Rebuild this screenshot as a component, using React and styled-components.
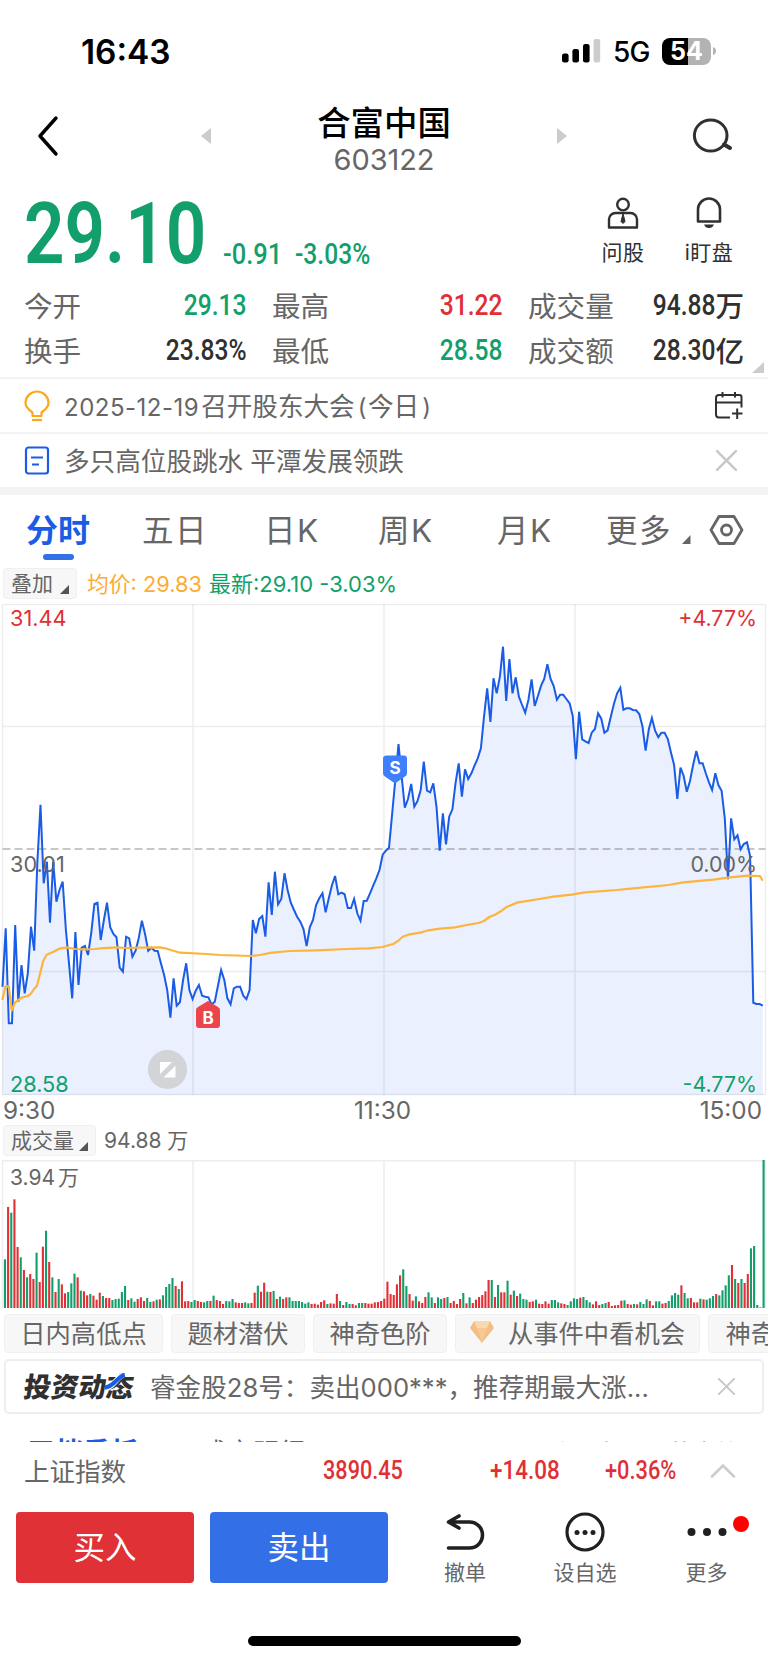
import React from 'react'
import styled, { createGlobalStyle } from 'styled-components'

const GREEN = '#139f6b'
const RED = '#e03035'
const BLUE = '#1a5ce6'
const GREY = '#666'
const DARK = '#303030'

// one value per minute, measured downwards in thirds of a pixel
const PRICES = `1160 985 1270 1270 975 1205 1095 1180 1120 980 1052 790 614 850 785 968 785 905 870 845
990 1090 1195 996 1155 1043 1038 1065 1000 912 908 1020 960 908 982 1002 1012 1103 1115 1010
1015 1070 1052 1015 962 1003 1052 1043 1052 1053 1090 1125 1170 1253 1135 1217 1207 1140 1090 1170
1197 1172 1155 1187 1190 1192 1213 1205 1158 1110 1140 1195 1213 1165 1160 1160 1187 1197 1170 960
1000 957 948 1010 847 945 815 913 897 820 870 908 930 950 965 987 1038 982 960 915
895 880 937 895 855 828 883 878 883 924 924 897 940 962 903 902 880 857 835 810
764 752 743 640 540 432 530 623 597 552 620 603 570 485 572 577 550 620 752 640
733 650 628 550 490 590 508 537 520 497 475 445 350 265 366 235 280 230 140 303
177 280 232 290 315 338 300 238 318 288 257 237 193 237 258 299 284 284 297 310
347 478 335 418 424 429 398 387 340 356 398 391 350 312 280 263 329 325 325 330
331 342 378 452 388 354 392 412 398 398 417 457 495 597 503 527 575 543 495 453
490 490 520 547 570 520 556 572 655 838 655 718 706 748 732 727 768 1208 1212 1212 1217`
  .split(/\s+/)
  .map(Number)

const AVERAGE = `7,1200 16,1160 26,1158 35,1232 45,1208 64,1193 83,1188 92,1182 102,1167 111,1157 121,1118
130,1082 140,1064 159,1056 178,1046 200,1042 225,1047 255,1048 285,1047 300,1045 350,1042 380,1044
420,1043 480,1042 500,1046 515,1051 540,1058 620,1062 660,1065 755,1068 780,1065 815,1058 870,1053
950,1051 1040,1047 1105,1045 1148,1041 1160,1037 1180,1032 1195,1022 1208,1010 1225,1004 1265,997
1285,991 1320,986 1365,982 1400,975 1435,969 1452,963 1468,951 1485,944 1505,932 1518,922 1550,908
1600,900 1660,890 1715,884 1755,877 1850,870 1900,865 2005,855 2050,847 2140,839 2190,832 2245,827
2280,828 2288,842`
  .split(/\s+/)
  .map(p => p.split(',').map(Number))

const VOLUMES = `g146 r303 g286 r326 r183 g152 r114 g92 r102 r87 g166 r78 r184 g232 r138 g92 r48 g87 r71 r44
g48 g74 g103 r92 g52 r50 r38 g42 r37 r25 r46 g36 r30 r30 g24 g27 g28 g48 g66 r24
g29 g19 r27 r32 r21 g30 g18 r20 g25 r26 g38 g63 g72 g90 r66 g57 r80 r20 r21 g18
g24 r21 r18 g17 g21 r21 g37 r24 r21 r12 g21 g20 g27 r17 r15 r15 g17 g14 r15 r46
g67 r49 r76 g49 r48 g51 r27 g34 r27 r32 g32 g21 g21 g21 g18 g13 g17 r12 r13 r10
r18 r23 g12 r14 r13 r42 g21 r9 g18 g12 r12 r8 g15 g15 r15 r13 r13 r17 r18 r21
r28 r79 r42 r39 r71 r98 g116 g66 r42 r22 g35 r20 r15 r33 g47 g32 r15 g32 g27 r30
g33 r15 r21 r12 r27 g45 r14 g32 r15 r25 r33 r39 r50 r84 g84 r33 g69 r47 r47 g82
r40 g52 r36 g43 g27 g25 r18 r20 g25 r13 r12 r20 r13 g24 g24 g17 r14 r12 g9 g20
g29 g27 r31 g33 g24 g17 r11 r20 r9 g12 g15 r18 r6 r8 r9 r22 g23 r12 r10 g12
r11 g18 g12 g26 r21 r8 g20 g20 r13 r15 g21 g38 g45 g40 r68 g45 g29 r30 r17 r17
g28 r26 g25 g29 g36 r42 g38 g53 g68 g98 r129 g87 r75 g87 r75 r102 g179 g186 g9 g2 g444`
  .split(/\s+/)
  .map(v => ({ color: v[0] === 'r' ? RED : GREEN, height: Number(v.slice(1)) / 3 }))

const pricePoints = PRICES.map((y, i) => `${(2.5 + i * 3.168).toFixed(1)},${(y / 3 - 4).toFixed(1)}`).join(' ')
const averagePoints = AVERAGE.map(([x, y]) => `${(x / 3).toFixed(1)},${(y / 3 - 4).toFixed(1)}`).join(' ')

const stats = [
  ['今开', '29.13', GREEN],
  ['最高', '31.22', RED],
  ['成交量', '94.88', DARK, '万'],
  ['换手', '23.83%', DARK],
  ['最低', '28.58', GREEN],
  ['成交额', '28.30', DARK, '亿']
]

const tabs = ['分时', '五日', '日K', '周K', '月K', '更多']

function Close({ size }) {
  return (
    <svg width={size} height={size} viewBox="0 0 20 20">
      <path d="M1 1l18 18M19 1L1 19" stroke="#c8c8c8" strokeWidth="2.4" strokeLinecap="round" />
    </svg>
  )
}

function StatusBar() {
  return (
    <Status>
      <Clock>16:43</Clock>
      <svg width="40" height="26" viewBox="0 0 40 26">
        <rect x="0" y="15.5" width="6.6" height="9" rx="2.2" />
        <rect x="10.4" y="11" width="6.6" height="13.5" rx="2.2" />
        <rect x="21" y="6" width="6.6" height="18.5" rx="2.2" />
        <rect x="31.6" y="1" width="6.6" height="23.5" rx="2.2" fill="#ccc" />
      </svg>
      <Network>5G</Network>
      <Battery>54</Battery>
      <svg width="5" height="10" viewBox="0 0 5 10">
        <path d="M1 1q3 1 3 4t-3 4z" fill="#b3b3b3" />
      </svg>
    </Status>
  )
}

function Header() {
  return (
    <HeaderRow>
      <BackIcon width="26" height="42" viewBox="0 0 26 42">
        <path d="M20 3L4 21l16 18" fill="none" stroke="#000" strokeWidth="3.4" strokeLinecap="round" strokeLinejoin="round" />
      </BackIcon>
      <svg width="12" height="18" viewBox="0 0 12 18">
        <path d="M11 1v16L1 9z" fill="#ccc" />
      </svg>
      <Title>
        <Name>合富中国</Name>
        <Code>603122</Code>
      </Title>
      <svg width="12" height="18" viewBox="0 0 12 18">
        <path d="M1 1v16L11 9z" fill="#ccc" />
      </svg>
      <SearchIcon width="44" height="40" viewBox="0 0 44 40" fill="none" stroke={DARK} strokeWidth="3">
        <ellipse cx="20.7" cy="19.5" rx="16.3" ry="15.6" />
        <path d="M34 28.500l6 3.500" strokeWidth="4" strokeLinecap="round" />
      </SearchIcon>
    </HeaderRow>
  )
}

function Quote() {
  return (
    <QuoteRow>
      <Din $size={86} $scale={0.825} $width={199} $weight={600}>29.10</Din>
      <Change $size={30} $scale={0.85} $width={72}>-0.91</Change>
      <Change $size={30} $scale={0.82} $width={80}>-3.03%</Change>
      <Spacer />
      <Shortcut $width={44}>
        <svg width="32" height="32" viewBox="0 0 32 32" fill="none" stroke={DARK} strokeWidth="2.4">
          <circle cx="16" cy="7.600" r="5.800" />
          <path d="M2 30.500v-8a6.500 6.500 0 0 1 6.500-6.500h15a6.500 6.500 0 0 1 6.500 6.500v8z" strokeLinejoin="round" />
          <path d="M16 16.500l2 8-2 2-2-2z" fill={DARK} strokeWidth="1" />
        </svg>
        问股
      </Shortcut>
      <Shortcut $width={50}>
        <svg width="32" height="32" viewBox="0 0 32 32" fill="none" stroke={DARK} strokeWidth="2.6">
          <path d="M5 24.500V12.500a11 11 0 0 1 22 0v12z" strokeLinejoin="round" />
          <path d="M11 27.600h10q-1.500 3.500-5 3.500t-5-3.500z" fill={DARK} stroke="none" />
        </svg>
        i盯盘
      </Shortcut>
    </QuoteRow>
  )
}

function Stats() {
  return (
    <StatGrid>
      {stats.map(([label, value, color, unit]) => (
        <Stat key={label}>
          {label}
          <StatValue $color={color}>
            <Squeezed>{value}</Squeezed>
            {unit}
          </StatValue>
        </Stat>
      ))}
      <Corner width="12" height="11" viewBox="0 0 12 11">
        <path d="M12 0v11H0z" fill="#ccc" />
      </Corner>
    </StatGrid>
  )
}

function Notices() {
  return (
    <>
      <Notice>
        <svg width="26" height="32" viewBox="0 0 26 32" fill="none" stroke="#fba91a" strokeWidth="2.200">
          <path d="M8.500 26v-3.500C5 20 1.500 17 1.500 13a11 11 0 0 1 23 0c0 4-3.500 7-7 9.500V26z" strokeLinejoin="round" />
          <path d="M8 30h10" />
        </svg>
        <NoticeText>
          <Wide>2025-12-19</Wide>召开股东大会<Wide>(</Wide>今日<Wide>)</Wide>
        </NoticeText>
        <svg width="28" height="28" viewBox="0 0 28 28" fill="none" stroke={DARK} strokeWidth="2">
          <path d="M15 25.500H4a3 3 0 0 1-3-3V6a3 3 0 0 1 3-3h20.500a2 2 0 0 1 2 2v10.500M1 10.500h25.500M7.500 0v5.500M20 0v5.500M17 21.500h10.500M22.200 16.500V27" />
        </svg>
      </Notice>
      <Notice>
        <svg width="26" height="30" viewBox="0 0 26 30" fill="none" stroke={BLUE} strokeWidth="2.200">
          <rect x="2" y="1.500" width="22" height="26" rx="2.500" />
          <path d="M7 11.500h12M8 18.500h7" />
        </svg>
        <NoticeText>多只高位股跳水 平潭发展领跌</NoticeText>
        <CloseSlot>
          <Close size={21} />
        </CloseSlot>
      </Notice>
    </>
  )
}

function Tabs() {
  return (
    <TabRow>
      {tabs.map((tab, i) => (
        <Tab key={tab} $active={i === 0}>
          {tab}
        </Tab>
      ))}
      <svg width="64" height="36" viewBox="0 0 64 36" fill="none" stroke={GREY} strokeWidth="2.800">
        <path d="M9.500 23v9H1z" fill={GREY} stroke="none" />
        <path d="M38 4.500h15l8 13.500-8 13.500H38L30 18z" strokeLinejoin="round" />
        <circle cx="45.500" cy="18" r="5" />
      </svg>
    </TabRow>
  )
}

function Picker({ children, width }) {
  return (
    <PickerBox $width={width}>
      {children}
      <svg width="9" height="9" viewBox="0 0 9 9">
        <path d="M9 0v9H0z" fill="#555" />
      </svg>
    </PickerBox>
  )
}

function PriceChart() {
  return (
    <Chart width="768" height="492" viewBox="0 0 768 492">
      <polygon points={`2.500,491 ${pricePoints} 762.800,491`} fill="#eaf0fe" />
      <g stroke="#000" strokeOpacity="0.07" strokeWidth="1.500">
        <path d="M2.500 0.500H765.500V490.500H2.500z" fill="none" />
        <path d="M2.500 122.500H765.500M2.500 367.500H765.500M193 0V491M384 0V491M575 0V491" />
      </g>
      <path d="M2.500 245H765.500" stroke="#000" strokeOpacity="0.22" strokeWidth="2" strokeDasharray="8 4" />
      <polyline points={pricePoints} fill="none" stroke={BLUE} strokeWidth="2" />
      <polyline points={averagePoints} fill="none" stroke="#fdb43c" strokeWidth="2.200" strokeLinejoin="round" />
      <text x="10" y="22" fill={RED}>31.44</text>
      <text x="10" y="268" fill={GREY}>30.01</text>
      <text x="10" y="487.500" fill={GREEN}>28.58</text>
      <Percents>
        <text x="757" y="22" fill={RED}>+4.77%</text>
        <text x="757" y="268" fill={GREY}>0.00%</text>
        <text x="757" y="487.500" fill={GREEN}>-4.77%</text>
      </Percents>
      <path d="M208 397l10 6q2 1 2 3v15q0 3-3 3h-18q-3 0-3-3v-15q0-2 2-3z" fill="#ec444b" />
      <path d="M387 151.500h17q3 0 3 3v15q0 2-2 3l-10 7-10-7q-2-1-2-3v-15q0-3 4-3z" fill="#3e80fb" />
      <Mark x="208" y="420">B</Mark>
      <Mark x="395" y="169.500">S</Mark>
      <circle cx="167.500" cy="465.500" r="19.600" fill="#d3d4d8" />
      <path d="M160 458h12l-12 12zM175.500 461.500v12h-12z" fill="#fff" />
    </Chart>
  )
}

function VolumeChart() {
  return (
    <Chart width="768" height="148" viewBox="0 0 768 148">
      <path d="M2.500 148V0.700H765.500V148M193 0V148M384 0V148M575 0V148" fill="none" stroke="#ededee" strokeWidth="1.500" />
      {VOLUMES.map(({ color, height }, i) => (
        <rect key={i} x={3.9 + i * 3.161} y={148 - height} width="2.1" height={height} fill={color} />
      ))}
      <VolumeMax x="10" y="24.500">3.94 万</VolumeMax>
    </Chart>
  )
}

function Diamond() {
  return (
    <svg width="24" height="22" viewBox="0 0 24 22">
      <path d="M4 0h16l4 7-12 15L0 7z" fill="#f3bd84" />
      <path d="M4 0h16l-3 7H7z" fill="#f9d9b0" />
      <path d="M7 7h10l-5 15z" fill="#f6c893" />
    </svg>
  )
}

function Chips() {
  return (
    <ChipRow>
      <Chip $width={159}>日内高低点</Chip>
      <Chip $width={134}>题材潜伏</Chip>
      <Chip $width={134}>神奇色阶</Chip>
      <Chip $width={245}>
        <Diamond />
        从事件中看机会
      </Chip>
      <Chip $width={136}>神奇电波</Chip>
    </ChipRow>
  )
}

function News() {
  return (
    <NewsBox>
      <Logo>
        投资动态
        <Swoosh width="22" height="17" viewBox="0 0 22 17">
          <path d="M0 15.500C9 14.500 10 4 18 1" fill="none" stroke="#fff" strokeWidth="6" />
          <path d="M0 14.500C9 13.500 11 4 18 1.500" fill="none" stroke={BLUE} strokeWidth="4.600" />
        </Swoosh>
      </Logo>
      <NewsText>睿金股28号：卖出000***，推荐期最大涨...</NewsText>
      <Close size={17} />
    </NewsBox>
  )
}

function IndexRow() {
  return (
    <IndexBar>
      <IndexName>上证指数</IndexName>
      <Din $size={25.5} $scale={0.85} $width={167}>3890.45</Din>
      <Din $size={25.5} $scale={0.88} $width={115}>+14.08</Din>
      <Din $size={25.5} $scale={0.855} $width={105}>+0.36%</Din>
      <svg width="26" height="16" viewBox="0 0 26 16">
        <path d="M2 13.500L13 2.500l11 11" fill="none" stroke="#ccc" strokeWidth="2.600" strokeLinecap="round" />
      </svg>
    </IndexBar>
  )
}

function Footer() {
  return (
    <FooterRow>
      <Trade $color="#e03136">买入</Trade>
      <Trade $color="#3370e7">卖出</Trade>
      <Action $width={122}>
        <svg width="40" height="40" viewBox="0 0 40 40" fill="none" stroke="#202020" strokeWidth="3.600" strokeLinecap="round" strokeLinejoin="round">
          <path d="M14 4L3.500 10l10.500 6M4 10h20.500a13 13 0 0 1 0 26H3.500" />
        </svg>
        撤单
      </Action>
      <Action $width={118}>
        <svg width="40" height="40" viewBox="0 0 40 40">
          <circle cx="20" cy="20" r="18" fill="none" stroke="#202020" strokeWidth="3.200" />
          <g fill="#202020">
            <circle cx="12" cy="20.500" r="2.500" />
            <circle cx="20" cy="20.500" r="2.500" />
            <circle cx="28" cy="20.500" r="2.500" />
          </g>
        </svg>
        设自选
      </Action>
      <Action $width={125}>
        <svg width="40" height="40" viewBox="0 0 40 40" fill="#202020">
          <circle cx="4.500" cy="20" r="4" />
          <circle cx="20" cy="20" r="4" />
          <circle cx="35.500" cy="20" r="4" />
        </svg>
        更多
        <Dot />
      </Action>
    </FooterRow>
  )
}

export default function App() {
  return (
    <Page>
      <Reset />
      <StatusBar />
      <Header />
      <Quote />
      <Stats />
      <Notices />
      <Band />
      <Tabs />
      <Legend $height={39}>
        <Picker width={74}>叠加</Picker>
        <Average>均价: 29.83</Average>
        <Latest>最新:29.10 -3.03%</Latest>
      </Legend>
      <PriceChart />
      <Times>
        <Time>9:30</Time>
        <Time>11:30</Time>
        <Time>15:00</Time>
      </Times>
      <Legend $height={38}>
        <Picker width={93}>成交量</Picker>
        <VolumeTotal>94.88 万</VolumeTotal>
      </Legend>
      <VolumeChart />
      <Chips />
      <News />
      <Peek>
        <PeekTab $active>五档委托</PeekTab>
        <PeekTab>成交明细</PeekTab>
        <PeekLink>升级分析</PeekLink>
        <PeekLink>逐笔大单</PeekLink>
      </Peek>
      <IndexRow />
      <Footer />
      <HomeBar />
    </Page>
  )
}

const Reset = createGlobalStyle`
  * {
    box-sizing: border-box;
  }

  body {
    margin: 0;
    background: #fff;
    font-family: Inter, 'Noto Sans CJK SC', sans-serif;
  }

  svg {
    display: block;
    flex: none;
  }
`

const Page = styled.div`
  display: flex;
  flex-direction: column;
  width: 768px;
  height: 1663px;
  overflow: hidden;
  color: ${GREY};
  white-space: nowrap;
`

const Status = styled.div`
  display: flex;
  align-items: center;
  height: 90px;
  padding: 12px 0 0 81px;
  color: #000;
`

const Clock = styled.div`
  width: 481px;
  padding-top: 1px;
  font-size: 33.4px;
  font-weight: 600;
`

const Network = styled.div`
  width: 49px;
  margin: 2px 0 0 11px;
  font-size: 28px;
  font-weight: 450;
  letter-spacing: -0.8px;
`

const Battery = styled.div`
  width: 49px;
  height: 27px;
  border-radius: 8px;
  background: linear-gradient(90deg, #000 54%, #b3b3b3 54%);
  color: #fff;
  font-size: 25px;
  font-weight: 700;
  line-height: 27px;
  text-align: center;
  margin-right: 1px;
`

const HeaderRow = styled.div`
  display: flex;
  align-items: center;
  height: 92px;
  padding-left: 36px;
`

const BackIcon = styled.svg`
  margin-right: 138px;
`

const SearchIcon = styled.svg`
  margin-left: 122px;
`

const Title = styled.div`
  width: 344px;
  text-align: center;
`

const Name = styled.div`
  margin-top: 5px;
  color: #000;
  font-size: 33.4px;
  font-weight: 500;
  line-height: 42px;
`

const Code = styled.div`
  font-size: 29px;
  line-height: 32px;
  letter-spacing: -0.1px;
`

const QuoteRow = styled.div`
  display: flex;
  align-items: flex-end;
  height: 100px;
  padding: 0 34px 5px 24px;
  color: ${GREEN};
`

// condensed figures
const Din = styled.div`
  width: ${p => p.$width}px;
  font-family: Roboto, sans-serif;
  font-size: ${p => p.$size}px;
  font-weight: ${p => p.$weight || 500};
  line-height: 1;
  transform: scaleX(${p => p.$scale});
  transform-origin: left;
`

const Change = styled(Din)`
  margin-bottom: 8px;
`

const Spacer = styled.div`
  flex: 1;
`

const Shortcut = styled.div`
  display: flex;
  flex-direction: column;
  align-items: center;
  width: ${p => p.$width}px;
  margin: 0 0 12px 39px;
  color: ${DARK};
  font-size: 21px;
  line-height: 24px;
  letter-spacing: 0.5px;

  svg {
    margin-bottom: 12px;
  }
`

const StatGrid = styled.div`
  position: relative;
  display: grid;
  grid-template-columns: 223px 231px 216px;
  column-gap: 25px;
  grid-auto-rows: 45px;
  height: 95px;
  padding: 0 24px;
`

const Stat = styled.div`
  display: flex;
  align-items: center;
  justify-content: space-between;
  height: 44px;
  font-size: 28.6px;
`

const StatValue = styled.div`
  display: flex;
  align-items: center;
  color: ${p => p.$color};
  font-weight: 500;
`

const Squeezed = styled.span`
  font-family: Roboto, sans-serif;
  font-size: 30px;
  margin-left: -16px;
  transform: scaleX(0.82);
  transform-origin: right;
`

const Corner = styled.svg`
  position: absolute;
  right: 4px;
  bottom: 4px;
`

const Notice = styled.div`
  display: flex;
  align-items: center;
  height: 55px;
  padding: 0 25px 0 24px;
  border-top: 2px solid #f3f3f3;
`

const NoticeText = styled.div`
  flex: 1;
  margin-left: 14px;
  padding-bottom: 3px;
  font-size: 25.6px;
`

const Wide = styled.span`
  margin-right: 2px;
  font-size: 24px;
  letter-spacing: 0.5px;

  & + & {
    margin: 0 1px 0 3px;
  }
`

const CloseSlot = styled.div`
  margin-right: 6px;
`

const Band = styled.div`
  height: 8px;
  background: #f4f4f4;
`

const TabRow = styled.div`
  display: grid;
  grid-template-columns: 116px 122px 114px 119px 109px 75px 64px;
  align-items: center;
  height: 70px;
  padding-left: 26px;
`

const Tab = styled.div`
  position: relative;
  padding-bottom: 4px;
  color: ${p => (p.$active ? BLUE : GREY)};
  font-size: ${p => (p.$active ? 32 : 31.500)}px;
  font-weight: ${p => (p.$active ? 700 : 400)};
  letter-spacing: ${p => (p.$active ? 0 : 1.5)}px;

  &::after {
    content: '';
    position: absolute;
    left: 17px;
    bottom: -5px;
    width: 31px;
    height: 6px;
    border-radius: 3px;
    background: ${p => (p.$active ? '#3370e7' : 'transparent')};
  }
`

const Legend = styled.div`
  display: flex;
  align-items: center;
  height: ${p => p.$height}px;
  padding: 0 0 2px 3px;
  font-size: 21px;
`

const PickerBox = styled.div`
  display: flex;
  align-items: flex-end;
  justify-content: space-between;
  width: ${p => p.$width}px;
  height: 31px;
  padding: 0 7px;
  border: 1px solid #f0f0f0;
  border-radius: 4px;
  background: #f7f7f7;
  line-height: 29px;

  svg {
    margin-bottom: 4px;
  }
`

const Average = styled.div`
  width: 122px;
  margin-left: 10px;
  padding-bottom: 2px;
  color: #fdac32;
  font-size: 21.8px;
`

const Latest = styled.div`
  padding-bottom: 3px;
  color: ${GREEN};
  font-size: 22px;
`

const VolumeTotal = styled.div`
  margin-left: 8px;
  padding-bottom: 2px;
`

const Chart = styled.svg`
  font-size: 21.7px;
`

const Percents = styled.g`
  font-size: 21.4px;
  text-anchor: end;
`

const VolumeMax = styled.text`
  fill: ${GREY};
  font-size: 21px;
  word-spacing: -3px;
`

const Mark = styled.text`
  fill: #fff;
  font-size: 17px;
  font-weight: 700;
  text-anchor: middle;
`

const Times = styled.div`
  display: grid;
  grid-template-columns: 1fr 1fr 1fr;
  height: 26px;
  padding: 0 6px 0 3px;
  font-size: 24.3px;
  line-height: 28px;
`

const Time = styled.span`
  text-align: center;

  &:first-child {
    text-align: left;
  }

  &:last-child {
    text-align: right;
  }
`

const ChipRow = styled.div`
  display: flex;
  gap: 8px;
  height: 39px;
  margin: 6px 0 6px 4px;
`

const Chip = styled.div`
  display: flex;
  flex: none;
  align-items: center;
  justify-content: center;
  gap: 14px;
  width: ${p => p.$width}px;
  padding-bottom: 3px;
  border: 1px solid #f0f0f0;
  border-radius: 4px;
  background: #f7f7f7;
  font-size: 25.3px;
`

const NewsBox = styled.div`
  display: flex;
  align-items: center;
  height: 55px;
  margin: 0 4px;
  padding: 0 27px 0 18px;
  border: 2px solid #eee;
  border-radius: 5px;
`

const Logo = styled.div`
  position: relative;
  width: 111px;
  color: ${DARK};
  font-size: 27.4px;
  font-weight: 900;
  line-height: 30px;
  transform: skewX(-8deg);
`

const Swoosh = styled.svg`
  position: absolute;
  right: 8px;
  top: 1px;
`

const NewsText = styled.div`
  flex: 1;
  margin-left: 15px;
  padding-bottom: 2px;
  font-size: 25.6px;
`

const Peek = styled.div`
  display: flex;
  height: 5px;
  margin-top: 23px;
  padding: 0 31px 0 27px;
  overflow: hidden;
`

const PeekTab = styled.div`
  flex: none;
  width: 174px;
  color: ${p => (p.$active ? BLUE : GREY)};
  font-size: ${p => (p.$active ? 28 : 26)}px;
  font-weight: ${p => (p.$active ? 700 : 400)};
  line-height: ${p => (p.$active ? 32 : 31)}px;
`

const PeekLink = styled.div`
  margin-left: auto;
  color: ${BLUE};
  font-size: 22px;
  line-height: 30px;

  & + & {
    margin-left: 26px;
  }
`

const IndexBar = styled.div`
  display: flex;
  align-items: center;
  height: 58px;
  padding-left: 24px;
  color: ${RED};
`

const IndexName = styled.div`
  width: 299px;
  padding-bottom: 4px;
  color: ${GREY};
  font-size: 25.5px;
`

const FooterRow = styled.div`
  display: flex;
  height: 136px;
  padding: 12px 0 0 16px;
`

const Trade = styled.div`
  flex: none;
  width: 178px;
  height: 71px;
  margin-right: 16px;
  border-radius: 4px;
  background: ${p => p.$color};
  color: #fff;
  font-size: 31.5px;
  line-height: 72px;
  text-align: center;
`

const Action = styled.div`
  position: relative;
  display: flex;
  flex: none;
  flex-direction: column;
  align-items: center;
  width: ${p => p.$width}px;
  font-size: 21px;
  line-height: 24px;

  svg {
    margin-bottom: 9px;
  }
`

const Dot = styled.div`
  position: absolute;
  top: 4px;
  left: 89px;
  width: 16px;
  height: 16px;
  border-radius: 50%;
  background: #f00;
`

const HomeBar = styled.div`
  width: 273px;
  height: 10px;
  margin-left: 248px;
  border-radius: 5px;
  background: #000;
`
